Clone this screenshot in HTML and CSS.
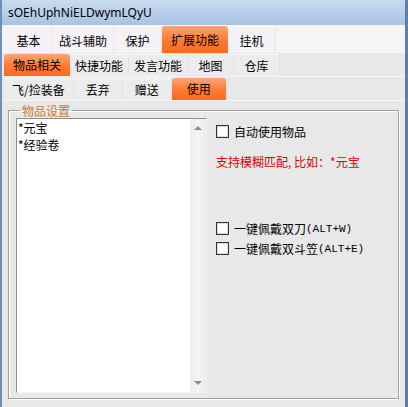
FILE: index.html
```html
<!DOCTYPE html>
<html lang="zh">

<head>
    <meta charset="UTF-8">
    <title>sOEhUphNiELDwymLQyU</title>
    <link rel="stylesheet" href="styles.css">
</head>

<body>
    <!-- Window frame -->
    <div class="window">
        <div class="titlebar">sOEhUphNiELDwymLQyU</div>

        <!-- Main tabs -->
        <div class="tabs tabs-main">
            <div class="tab">基本</div>
            <div class="tab">战斗辅助</div>
            <div class="tab">保护</div>
            <div class="tab active">扩展功能</div>
            <div class="tab">挂机</div>
        </div>

        <!-- Sub tabs -->
        <div class="tabs tabs-sub">
            <div class="tab active">物品相关</div>
            <div class="tab">快捷功能</div>
            <div class="tab">发言功能</div>
            <div class="tab">地图</div>
            <div class="tab">仓库</div>
        </div>

        <div class="tabs tabs-sub tabs-actions">
            <div class="tab">飞/捡装备</div>
            <div class="tab">丢弃</div>
            <div class="tab">赠送</div>
            <div class="tab active">使用</div>
        </div>

        <!-- Item settings group -->
        <div class="content">
            <fieldset class="group">
                <legend>物品设置</legend>
                <div class="listbox">
                    <div class="list-items">
                        <div>*元宝</div>
                        <div>*经验卷</div>
                    </div>
                    <div class="scrollbar">
                        <span class="arrow up"></span>
                        <span class="arrow down"></span>
                    </div>
                </div>
                <div class="options">
                    <label class="check"><span class="box"></span>自动使用物品</label>
                    <p class="hint">支持模糊匹配, 比如：*元宝</p>
                    <div class="hotkeys">
                        <label class="check"><span class="box"></span>一键佩戴双刀<span class="key">(ALT+W)</span></label>
                        <label class="check"><span class="box"></span>一键佩戴双斗笠<span class="key">(ALT+E)</span></label>
                    </div>
                </div>
            </fieldset>
        </div>
    </div>
</body>

</html>
```

FILE: styles.css
```css
/* Page */
body {
    margin: 0;
    font-family: "Noto Sans CJK SC", sans-serif;
    font-size: 12px;
    color: #000;
    background: #e8e8e8;
}

/* Window frame */
.window {
    width: 408px;
    height: 407px;
    box-sizing: border-box;
    border-left: 2px solid #6e8fb8;
    border-right: 3px solid #5f7fa8;
    background: #e8e8e8;
    display: flex;
    flex-direction: column;
    overflow: hidden;
}

.titlebar {
    height: 25px;
    line-height: 25px;
    padding-left: 6px;
    font-family: "Noto Sans", sans-serif;
    font-size: 12px;
    background: linear-gradient(#c9dbef, #a9c3e3);
    color: #000;
}

/* Tab rows */
.tabs {
    display: flex;
    align-items: flex-end;
}

.tabs-main {
    height: 28px;
    padding-left: 3px;
    background: #f6f4f7;
}

.tabs-sub {
    height: 23px;
    padding-left: 2px;
    border-bottom: 1px solid #f6f6f6;
}

.tab {
    box-sizing: border-box;
    min-width: 46px;
    padding: 0 5px;
    text-align: center;
    border-right: 1px solid #e2e2e2;
    border-top: 1px solid #fafafa;
    background: #ececec;
}

.tabs-main .tab {
    height: 27px;
    line-height: 27px;
    min-width: 48px;
    padding: 0 6px;
    background: #f4f2f5;
    border-right: 1px solid #e8e6ea;
}

.tabs-sub .tab {
    height: 22px;
    line-height: 22px;
}

.tabs-actions .tab {
    min-width: 49px;
    padding: 0 8px;
}

.tab.active,
.tabs-main .tab.active {
    padding: 0 9px;
    border-radius: 3px 3px 0 0;
    border: none;
    background: linear-gradient(#fca674, #ff7a33 55%, #ff6a1c);
}

.tabs-actions .tab.active {
    min-width: 54px;
}

/* Group box */
.content {
    flex: 1;
    padding: 3px 6px 8px 6px;
    display: flex;
}

.group {
    flex: 1;
    margin: 0;
    padding: 0 0 5px 7px;
    border: 1px solid #a0a0a0;
    box-shadow: inset 1px 1px 0 #fff, 1px 1px 0 #fff;
    display: flex;
    gap: 9px;
}

.group legend {
    color: #cc7a2b;
    padding: 0 2px;
    margin-left: 4px;
    line-height: 13px;
}

/* List box */
.listbox {
    width: 189px;
    margin-top: 1px;
    border: 1px solid #8f8f8f;
    border-right-color: #f4f4f4;
    border-bottom-color: #f4f4f4;
    background: #fff;
    display: flex;
}

.list-items {
    flex: 1;
    padding: 0 0 0 1px;
    line-height: 17px;
}

.scrollbar {
    width: 16px;
    background: linear-gradient(90deg, #ececec, #f6f4f6, #ececec);
    display: flex;
    flex-direction: column;
    justify-content: space-between;
    align-items: center;
    padding: 7px 0;
}

.arrow {
    width: 0;
    height: 0;
    border-left: 4px solid transparent;
    border-right: 4px solid transparent;
}

.arrow.up {
    border-bottom: 4px solid #8a8a8a;
}

.arrow.down {
    border-top: 4px solid #8a8a8a;
}

/* Right options column */
.options {
    flex: 1;
    padding-top: 4px;
}

.check {
    display: flex;
    align-items: center;
    height: 20px;
}

.box {
    width: 11px;
    height: 11px;
    border: 1px solid #333;
    background: #fff;
    box-shadow: inset 0 0 0 1px #dcdcdc;
    margin-right: 5px;
}

.hint {
    color: #e00000;
    margin: 13px 0 0 0;
    line-height: 16px;
}

.hotkeys {
    margin-top: 48px;
}

.key {
    font-family: "Liberation Mono", monospace;
    font-size: 11px;
    padding-top: 1px;
}
```
